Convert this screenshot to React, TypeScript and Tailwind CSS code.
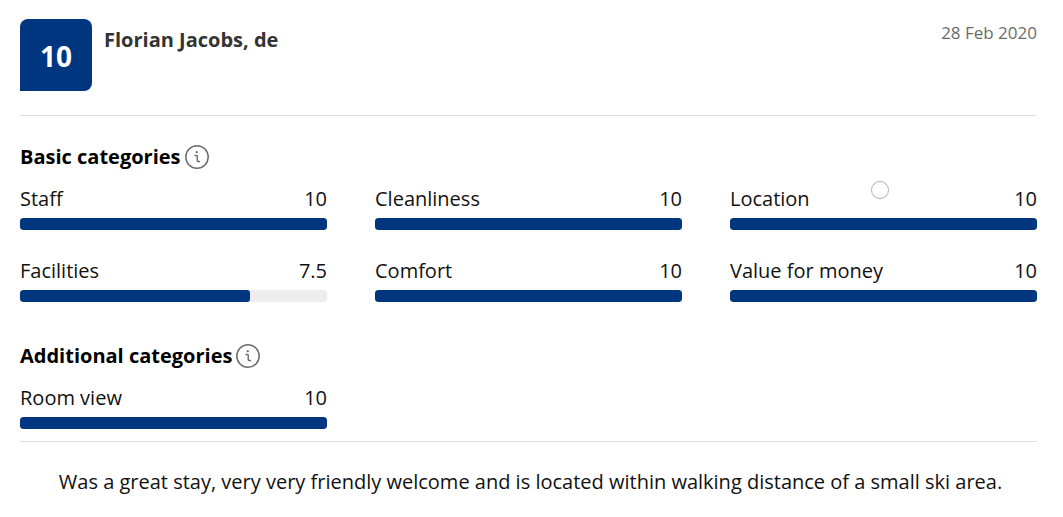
type Category = { name: string; score: number; marked?: boolean };

const basic: Category[] = [
  { name: "Staff", score: 10 },
  { name: "Cleanliness", score: 10 },
  { name: "Location", score: 10, marked: true },
  { name: "Facilities", score: 7.5 },
  { name: "Comfort", score: 10 },
  { name: "Value for money", score: 10 },
];

const additional: Category[] = [{ name: "Room view", score: 10 }];

function InfoButton({ label }: { label: string }) {
  return (
    <button type="button" aria-label={label} className="text-[#6b6b6b]">
      <svg viewBox="0 0 24 24" className="size-6" fill="none" stroke="currentColor">
        <circle cx="12" cy="12" r="11.2" strokeWidth="1.5" />
        <path d="M10 10.5h1.5a.75.75 0 0 1 .75.75v4.5a.75.75 0 0 0 .75.75h1.5" strokeWidth="1.4" strokeLinecap="round" strokeLinejoin="round" />
        <circle cx="11.8" cy="7.2" r="1.1" fill="currentColor" stroke="none" />
      </svg>
    </button>
  );
}

function Score({ name, score, marked }: Category) {
  return (
    <div className="relative">
      <div className="flex justify-between leading-7">
        <span>{name}</span>
        <span>{score}</span>
      </div>
      <div className="mt-[5px] h-3 overflow-hidden rounded-[3px] bg-[#ededed]">
        <div className="h-full rounded-[3px] bg-[#003580]" style={{ width: `${score * 10}%` }} />
      </div>
      {marked && (
        <span aria-hidden="true" className="absolute -top-1 left-[141px] size-[18px] rounded-full border border-[#b3afc4]" />
      )}
    </div>
  );
}

function Section({ title, items }: { title: string; items: Category[] }) {
  return (
    <section>
      <div className="flex items-center gap-1 text-black">
        <h2 className="font-bold leading-7">{title}</h2>
        <InfoButton label={`About ${title.toLowerCase()}`} />
      </div>
      <div className="mt-[14px] grid grid-cols-3 gap-x-12 gap-y-[27px]">
        {items.map((item) => (
          <Score key={item.name} {...item} />
        ))}
      </div>
    </section>
  );
}

export default function App() {
  return (
    <main className="bg-white pt-[19px] pr-[26px] pb-5 pl-5 font-['Open_Sans',sans-serif] text-xl text-[#111111]">
      <header className="flex items-start border-b border-[#dedede] pb-6">
        <div className="flex size-18 items-center justify-center rounded-lg rounded-bl-none bg-[#003580] pt-1 text-[28px] font-bold text-white">
          10
        </div>
        <h1 className="ml-3 grow font-bold leading-[42px] text-[#333333]">Florian Jacobs, de</h1>
        <time dateTime="2020-02-28" className="text-[17px] leading-7 text-[#6b6b6b]">28 Feb 2020</time>
      </header>
      <div className="flex flex-col gap-10 border-b border-[#dedede] pt-[27px] pb-3">
        <Section title="Basic categories" items={basic} />
        <Section title="Additional categories" items={additional} />
      </div>
      <p className="pt-6 pr-4 pl-5 text-center leading-8">
        Was a great stay, very very friendly welcome and is located within walking distance of a small ski area.
      </p>
    </main>
  );
}
